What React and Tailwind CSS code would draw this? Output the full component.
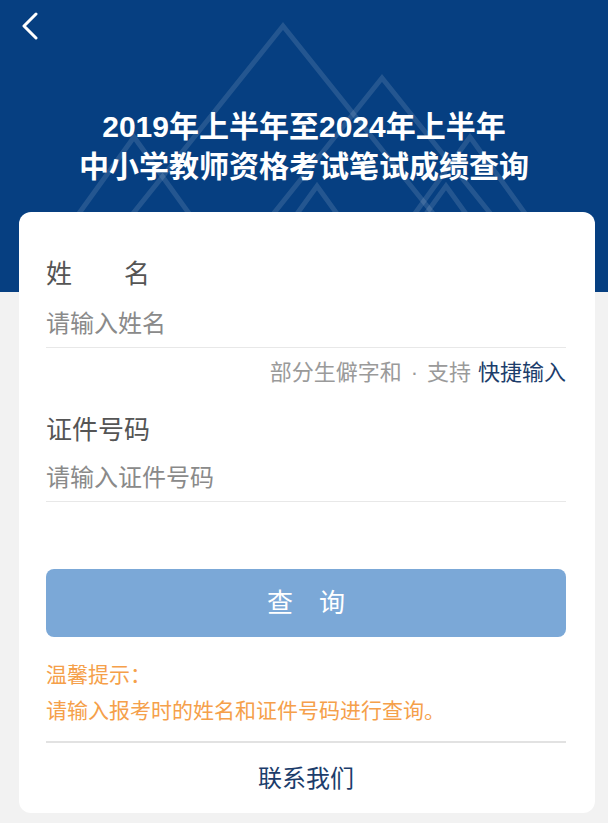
import React from "react";

const FONT = { fontFamily: '"Liberation Sans", "Noto Sans CJK SC", sans-serif' };

function Decor() {
  const tris = [
    [283, 26, 0.8],
    [382, 78, 0.8],
    [134, 137, 0.72],
    [470, 137, 0.72],
    [317, 186, 0.72],
    [446, 186, 0.72],
  ];
  return (
    <svg
      className="absolute left-0 top-0 pointer-events-none"
      width="608"
      height="292"
      viewBox="0 0 608 292"
    >
      {tris.map(([x, y, s], i) => {
        const dy = 292 - y;
        return (
          <polyline
            key={i}
            points={`${x - s * dy},${292} ${x},${y} ${x + s * dy},${292}`}
            fill="none"
            stroke="#ffffff"
            strokeOpacity="0.12"
            strokeWidth="5"
            strokeLinejoin="miter"
          />
        );
      })}
    </svg>
  );
}

export default function App() {
  return (
    <div className="min-h-screen bg-[#f2f2f2]" style={FONT}>
      <div className="relative h-[292px] overflow-hidden bg-[#063f81]">
        <Decor />
        <div className="relative pt-[12px] pl-[20px]">
          <svg width="20" height="28" viewBox="0 0 20 28">
            <polyline
              points="16,2 4,14 16,26"
              fill="none"
              stroke="#ffffff"
              strokeWidth="3"
              strokeLinecap="round"
              strokeLinejoin="round"
            />
          </svg>
        </div>
        <div className="relative mt-[67px] text-center text-[30px] leading-[40px] font-bold text-white">
          <div>2019年上半年至2024年上半年</div>
          <div>中小学教师资格考试笔试成绩查询</div>
        </div>
      </div>

      <div className="relative -mt-[80px] ml-[19px] mr-[13px] rounded-[12px] bg-white pl-[27px] pr-[29px] pt-[44px] pb-[16px]">
        <div className="text-[26px] leading-[36px] text-[#555555]">姓　　名</div>
        <div className="mt-[8px] flex h-[48px] items-center border-b border-[#e8e8e8] text-[24px] text-[#8a8a8a]">
          请输入姓名
        </div>
        <div className="mt-[10px] flex justify-end text-[22px] leading-[30px] text-[#9a9a9a]">
          <span>部分生僻字和</span>
          <span className="mx-[9px]">·</span>
          <span className="mr-[7px]">支持</span>
          <span className="text-[#1c3d6b]">快捷输入</span>
        </div>

        <div className="mt-[24px] text-[26px] leading-[36px] text-[#555555]">证件号码</div>
        <div className="mt-[6px] flex h-[48px] items-center border-b border-[#e8e8e8] text-[24px] text-[#8a8a8a]">
          请输入证件号码
        </div>

        <div className="mt-[67px] flex h-[68px] items-center justify-center rounded-[8px] bg-[#7ba8d7] text-[26px] text-white">
          查　询
        </div>

        <div className="mt-[20px] text-[21px] leading-[36px] text-[#f5a04a]">
          <div>温馨提示：</div>
          <div>请输入报考时的姓名和证件号码进行查询。</div>
        </div>

        <div className="mt-[12px] h-[2px] bg-[#e2e2e2]" />

        <div className="mt-[18px] text-center text-[24px] leading-[36px] text-[#1c3d6b]">
          联系我们
        </div>
      </div>
      <div className="h-[10px]" />
    </div>
  );
}
